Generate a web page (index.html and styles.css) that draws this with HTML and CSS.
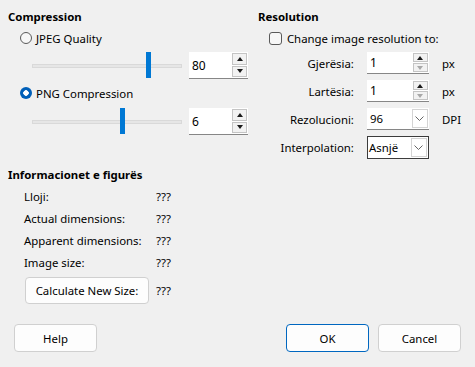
FILE: index.html
```html
<!DOCTYPE html>
<html>
<head>
<meta charset="UTF-8">
<title>Compression</title>
<link rel="stylesheet" href="styles.css">
</head>
<body>
<div class="dialog">
    <div class="top">
        <div class="compression">
            <div class="heading">Compression</div>
            <div class="radio-row"><span class="radio"></span>JPEG Quality</div>
            <div class="slider-row">
                <div class="slider"><div class="track"></div><div class="thumb" style="left: 114px"></div></div>
                <div class="spin big">
                    <span class="spin-value">80</span>
                    <span class="spin-buttons"><span class="spin-btn"><span class="arrow-up"></span></span><span class="spin-btn"><span class="arrow-down"></span></span></span>
                </div>
            </div>
            <div class="radio-row"><span class="radio checked"></span>PNG Compression</div>
            <div class="slider-row">
                <div class="slider"><div class="track"></div><div class="thumb" style="left: 88px"></div></div>
                <div class="spin big">
                    <span class="spin-value">6</span>
                    <span class="spin-buttons"><span class="spin-btn"><span class="arrow-up"></span></span><span class="spin-btn"><span class="arrow-down"></span></span></span>
                </div>
            </div>
        </div>
        <div class="resolution">
            <div class="heading">Resolution</div>
            <div class="check-row"><span class="checkbox"></span>Change image resolution to:</div>
            <div class="res-grid">
                <span class="res-label">Gjerësia:</span>
                <div class="spin small">
                    <span class="spin-value">1</span>
                    <span class="spin-buttons"><span class="spin-btn"><span class="arrow-up"></span></span><span class="spin-btn"><span class="arrow-down off"></span></span></span>
                </div>
                <span class="unit">px</span>

                <span class="res-label">Lartësia:</span>
                <div class="spin small">
                    <span class="spin-value">1</span>
                    <span class="spin-buttons"><span class="spin-btn"><span class="arrow-up"></span></span><span class="spin-btn"><span class="arrow-down off"></span></span></span>
                </div>
                <span class="unit">px</span>

                <span class="res-label">Rezolucioni:</span>
                <div class="combo">
                    <span class="combo-value">96</span>
                    <span class="combo-btn"><svg width="9" height="6" viewBox="0 0 9 6"><polyline points="0.5,0.5 4.5,4.5 8.5,0.5" fill="none" stroke="#666" stroke-width="1"/></svg></span>
                </div>
                <span class="unit">DPI</span>

                <span class="res-label">Interpolation:</span>
                <div class="combo framed">
                    <span class="combo-value">Asnjë</span>
                    <span class="combo-btn"><svg width="9" height="6" viewBox="0 0 9 6"><polyline points="0.5,0.5 4.5,4.5 8.5,0.5" fill="none" stroke="#666" stroke-width="1"/></svg></span>
                </div>
                <span></span>
            </div>
        </div>
    </div>

    <div class="info">
        <div class="heading">Informacionet e figurës</div>
        <div class="info-grid">
            <span>Lloji:</span><span>???</span>
            <span>Actual dimensions:</span><span>???</span>
            <span>Apparent dimensions:</span><span>???</span>
            <span>Image size:</span><span>???</span>
        </div>
        <div class="calc-row">
            <button class="btn calc">Calculate New Size:</button>
            <span>???</span>
        </div>
    </div>

    <div class="footer">
        <button class="btn">Help</button>
        <span class="spacer"></span>
        <button class="btn default">OK</button>
        <button class="btn">Cancel</button>
    </div>
</div>
</body>
</html>
```

FILE: styles.css
```css
/* Dialog look, Windows 11 style */
body {
    margin: 0;
    background-color: #f0f0f0;
    font-family: "Noto Sans", "Open Sans", sans-serif;
    font-size: 11.4px;
    color: #000;
}
.dialog {
    width: 475px;
    height: 367px;
    box-sizing: border-box;
    padding: 9px 14px 0 8px;
}
.top {
    display: flex;
}
.compression {
    width: 255px;
}
.heading {
    font-weight: bold;
    line-height: 16px;
    height: 16px;
}
.radio-row {
    display: flex;
    align-items: center;
    height: 16px;
    margin-top: 5px;
    padding-left: 12px;
}
.compression .radio-row + .slider-row + .radio-row {
    margin-top: 6px;
}
.radio {
    width: 10px;
    height: 10px;
    border: 1px solid #5a5a5a;
    border-radius: 50%;
    margin-right: 4px;
    background-color: #f7f7f7;
}
.radio.checked {
    width: 12px;
    height: 12px;
    border: none;
    background: radial-gradient(circle, #fff 0, #fff 2.5px, #005fb8 3px);
}
.slider-row {
    display: flex;
    align-items: center;
    height: 27px;
    margin-top: 6px;
    padding-left: 24px;
}
.slider-row + .radio-row + .slider-row {
    margin-top: 7px;
}
.slider {
    position: relative;
    width: 150px;
    height: 27px;
    margin-right: 7px;
}
.track {
    margin-top: 12px;
    height: 2px;
    background-color: #e6e6e6;
    border: 1px solid #d9d9d9;
}
.thumb {
    position: absolute;
    top: 0;
    width: 5px;
    height: 26px;
    background-color: #0078d4;
}
.spin {
    display: flex;
    background-color: #fff;
    border-bottom: 1px solid #868686;
    box-sizing: border-box;
}
.spin.big {
    width: 59px;
    height: 27px;
}
.spin.small {
    width: 62px;
    height: 22px;
}
.spin-value {
    flex: 1;
    padding-left: 3px;
    display: flex;
    align-items: center;
    font-size: 12px;
}
.spin-buttons {
    display: flex;
    flex-direction: column;
    gap: 1px;
    padding: 1px 1px 1px 0;
    width: 15px;
}
.spin-btn {
    flex: 1;
    display: flex;
    align-items: center;
    justify-content: center;
    background-color: #f2f2f2;
    border: 1px solid #c4c4c4;
}
.arrow-up {
    width: 0;
    height: 0;
    border-left: 3.5px solid transparent;
    border-right: 3.5px solid transparent;
    border-bottom: 4px solid #1a1a1a;
}
.arrow-down {
    width: 0;
    height: 0;
    border-left: 3.5px solid transparent;
    border-right: 3.5px solid transparent;
    border-top: 4px solid #1a1a1a;
}
.arrow-down.off {
    border-top-color: #a8a8a8;
}
.resolution {
    flex: 1;
}
.check-row {
    display: flex;
    align-items: center;
    height: 16px;
    margin-top: 5px;
    padding-left: 11px;
}
.checkbox {
    width: 11px;
    height: 11px;
    border: 1px solid #5a5a5a;
    border-radius: 3px;
    margin-right: 5px;
    background-color: #f7f7f7;
}
.res-grid {
    display: grid;
    grid-template-columns: 96px 62px auto;
    grid-auto-rows: 22px;
    column-gap: 13px;
    row-gap: 6px;
    margin-top: 6px;
    align-items: center;
}
.res-label {
    text-align: right;
}
.combo {
    display: flex;
    height: 22px;
    box-sizing: border-box;
    background-color: #fff;
    border-bottom: 1px solid #868686;
}
.combo.framed {
    height: 23px;
    border: 1px solid #3c3c3c;
    margin-top: 1px;
}
.combo-value {
    flex: 1;
    display: flex;
    align-items: center;
    padding-left: 3px;
}
.combo.framed .combo-value {
    padding-left: 1px;
}
.combo-btn {
    width: 14px;
    margin: 1px 1px 1px 0;
    display: flex;
    align-items: center;
    justify-content: center;
    border: 1px solid #d4d4d4;
    background-color: #fff;
}
.info {
    margin-top: 9px;
}
.info-grid {
    display: grid;
    grid-template-columns: 132px auto;
    grid-auto-rows: 16px;
    row-gap: 6px;
    margin-top: 6px;
    padding-left: 16px;
    line-height: 16px;
}
.calc-row {
    display: flex;
    align-items: center;
    gap: 7px;
    margin-top: 6px;
    padding-left: 17px;
}
.btn {
    font-family: inherit;
    font-size: 11.4px;
    color: #000;
    background-color: #fdfdfd;
    border: 1px solid #d0d0d0;
    border-radius: 4px;
    width: 83px;
    height: 28px;
    padding: 0;
}
.btn.calc {
    width: 124px;
    height: 27px;
}
.btn.default {
    border-color: #0067c0;
    margin-right: 9px;
}
.footer {
    display: flex;
    margin-top: 20px;
    padding-left: 6px;
}
.spacer {
    flex: 1;
}
```
